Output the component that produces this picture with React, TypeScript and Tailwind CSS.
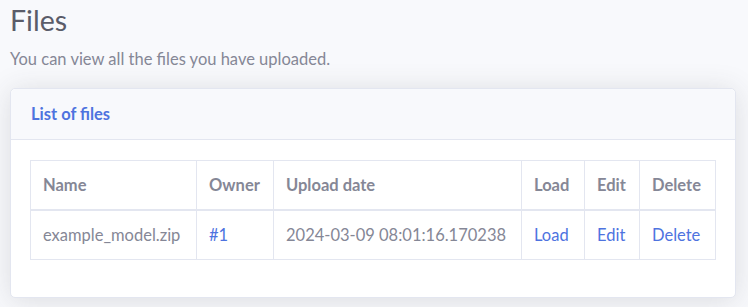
import React from "react";

export default function App() {
  const font = { fontFamily: '"Lato", "Noto Sans", sans-serif' };
  const th = "text-left font-bold px-[12px] py-[12px] border border-b-2 border-[#e3e6f0] whitespace-nowrap";
  const td = "px-[12px] py-[12px] border border-[#e3e6f0] whitespace-nowrap";
  return (
    <div className="min-h-screen bg-[#f8f9fc] text-[#858796] pl-[10px] pr-[12px] pt-[3px]" style={font}>
      <h3 className="text-[28.5px] leading-[1.2] font-normal text-[#5a5c69] mb-[10px]">Files</h3>
      <p className="text-[16.5px] leading-[24px] mb-[17px]">You can view all the files you have uploaded.</p>
      <div className="bg-white border border-[#e3e6f0] rounded-[5px] shadow-[0_0.15rem_1.75rem_0_rgba(58,59,69,0.15)]">
        <div className="bg-[#f8f9fc] border-b border-[#e3e6f0] px-[20px] py-[12px] rounded-t-[5px]">
          <h6 className="text-[16.5px] leading-[26px] font-bold text-[#4e73df]">List of files</h6>
        </div>
        <div className="px-[19px] pt-[20px] pb-[21px]">
          <table className="w-full border-collapse border border-[#e3e6f0] mb-[16px] text-[16.5px] leading-[24px]">
            <thead>
              <tr>
                <th className={th + " w-[166px]"}>Name</th>
                <th className={th + " w-[77px]"}>Owner</th>
                <th className={th}>Upload date</th>
                <th className={th + " w-[63px]"}>Load</th>
                <th className={th + " w-[55px]"}>Edit</th>
                <th className={th + " w-[76px]"}>Delete</th>
              </tr>
            </thead>
            <tbody>
              <tr>
                <td className={td}>example_model.zip</td>
                <td className={td}><a className="text-[#4e73df]" href="#">#1</a></td>
                <td className={td}>2024-03-09 08:01:16.170238</td>
                <td className={td}><a className="text-[#4e73df]" href="#">Load</a></td>
                <td className={td}><a className="text-[#4e73df]" href="#">Edit</a></td>
                <td className={td}><a className="text-[#4e73df]" href="#">Delete</a></td>
              </tr>
            </tbody>
          </table>
        </div>
      </div>
    </div>
  );
}
